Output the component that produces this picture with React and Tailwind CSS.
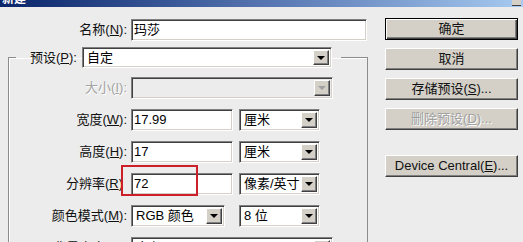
import React from 'react';

const sunken =
  'border border-t-[#808080] border-l-[#808080] border-r-white border-b-white shadow-[inset_1px_1px_0_#404040,inset_-1px_-1px_0_#d4d0c8]';
const raised =
  'border border-t-white border-l-white border-r-[#404040] border-b-[#404040] shadow-[inset_-1px_-1px_0_#808080]';

function Label({ children, disabled, className = '' }) {
  return (
    <span
      className={`w-[119px] shrink-0 text-right pr-[1px] ${
        disabled ? 'text-[#a3a3a3] [text-shadow:1px_1px_0_#fff]' : 'text-[#111]'
      } ${className}`}
    >
      {children}
    </span>
  );
}

function Field({ w, value, h = 'h-[22px]' }) {
  return (
    <div className={`${w} ${h} ${sunken} bg-white flex items-center pl-[2px] text-[13px] text-black`}>
      {value}
    </div>
  );
}

function Combo({ w, value, disabled, h = 'h-[22px]' }) {
  return (
    <div
      className={`${w} ${h} ${sunken} ${disabled ? 'bg-[#ececec]' : 'bg-white'} flex items-stretch p-[2px] text-[13px] text-black`}
    >
      <span className="flex-1 flex items-center pl-[2px] whitespace-nowrap overflow-hidden">{value}</span>
      <span className={`w-[16px] shrink-0 bg-[#d4d0c8] ${raised} flex items-center justify-center`}>
        <span
          className={`w-0 h-0 border-l-[4px] border-r-[4px] border-t-[4px] border-l-transparent border-r-transparent ${
            disabled ? 'border-t-[#a0a0a0]' : 'border-t-black'
          }`}
        />
      </span>
    </div>
  );
}

function Button({ children, primary, disabled }) {
  return (
    <button
      type="button"
      className={`w-[133px] h-[22px] bg-[#d4d0c8] text-[13px] flex items-center justify-center ${
        primary
          ? 'border border-black shadow-[inset_1px_1px_0_#fff,inset_-1px_-1px_0_#404040,inset_-2px_-2px_0_#808080]'
          : raised
      } ${disabled ? 'text-[#a0a0a0] [text-shadow:1px_1px_0_#fff]' : 'text-[#111]'}`}
    >
      {children}
    </button>
  );
}

function Row({ children }) {
  return <div className="flex items-center h-[22px] mt-[10px] first:mt-0">{children}</div>;
}

export default function App() {
  return (
    <div className="w-[523px] h-[242px] overflow-hidden bg-[#ececec] text-[13px] font-['Liberation_Sans','Noto_Sans_CJK_SC',sans-serif]">
      {/* title bar, mostly cut off */}
      <div className="h-[7px] overflow-hidden flex justify-between bg-gradient-to-r from-[#0a246a] via-[#5574b0] to-[#a6caf0]">
        <span className="-mt-[9px] pl-[2px] text-[12px] font-bold text-white leading-[16px]">新建</span>
        <span className="w-[9px] h-[6px] mr-[2px] bg-[#d4d0c8] border-b border-[#404040]" />
      </div>

      <div className="flex">
        <div className="w-[370px] shrink-0">
          <div className="flex items-center h-[22px] mt-[12px]">
            <Label className="w-[128px] pr-0">
              名称(<u>N</u>):
            </Label>
            <div className="ml-[3px]">
              <Field w="w-[236px]" value="玛莎" />
            </div>
          </div>

          <fieldset className="mt-[6px] ml-[8px] w-[360px] h-[200px] px-0 border-t border-l border-r border-[#8c8c8c] shadow-[inset_1px_1px_0_#fff]">
            <legend className="ml-[7px] pl-[14px] pr-[9px]">
              <div className="flex items-center">
                <span className="text-[#111]">
                  预设(<u>P</u>):
                </span>
                <div className="ml-[5px]">
                  <Combo w="w-[250px]" h="h-[21px]" value="自定" />
                </div>
              </div>
            </legend>

            <div className="mt-[9px]">
              <Row>
                <Label disabled>
                  大小(<u>I</u>):
                </Label>
                <div className="ml-[3px]">
                  <Combo w="w-[202px]" value="" disabled />
                </div>
              </Row>
              <Row>
                <Label>
                  宽度(<u>W</u>):
                </Label>
                <div className="ml-[3px] flex gap-[6px]">
                  <Field w="w-[102px]" value="17.99" />
                  <Combo w="w-[81px]" value="厘米" />
                </div>
              </Row>
              <Row>
                <Label>
                  高度(<u>H</u>):
                </Label>
                <div className="ml-[3px] flex gap-[6px]">
                  <Field w="w-[102px]" value="17" />
                  <Combo w="w-[81px]" value="厘米" />
                </div>
              </Row>
              <Row>
                <Label className="pr-[5px]">
                  分辨率(<u>R</u>)
                </Label>
                <div className="ml-[3px] flex gap-[6px]">
                  <div className="relative">
                    <Field w="w-[102px]" value="72" />
                    <div className="absolute -left-[10px] -top-[8px] w-[77px] h-[31px] border-2 border-[#cc1f2a]" />
                  </div>
                  <Combo w="w-[81px]" value="像素/英寸" />
                </div>
              </Row>
              <Row>
                <Label>
                  颜色模式(<u>M</u>):
                </Label>
                <div className="ml-[3px] flex gap-[14px]">
                  <Combo w="w-[94px]" value="RGB 颜色" />
                  <Combo w="w-[81px]" value="8 位" />
                </div>
              </Row>
              <Row>
                <Label>
                  背景内容(<u>C</u>):
                </Label>
                <div className="ml-[3px]">
                  <Combo w="w-[202px]" value="白色" />
                </div>
              </Row>
            </div>
          </fieldset>
        </div>

        <div className="pl-[15px] pt-[11px] flex flex-col gap-[8px]">
          <Button primary>确定</Button>
          <Button>取消</Button>
          <Button>
            存储预设(<u>S</u>)...
          </Button>
          <Button disabled>
            删除预设(<u>D</u>)...
          </Button>
          <div className="mt-[17px]">
            <Button>
              Device Central(<u>E</u>)...
            </Button>
          </div>
        </div>
      </div>
    </div>
  );
}
